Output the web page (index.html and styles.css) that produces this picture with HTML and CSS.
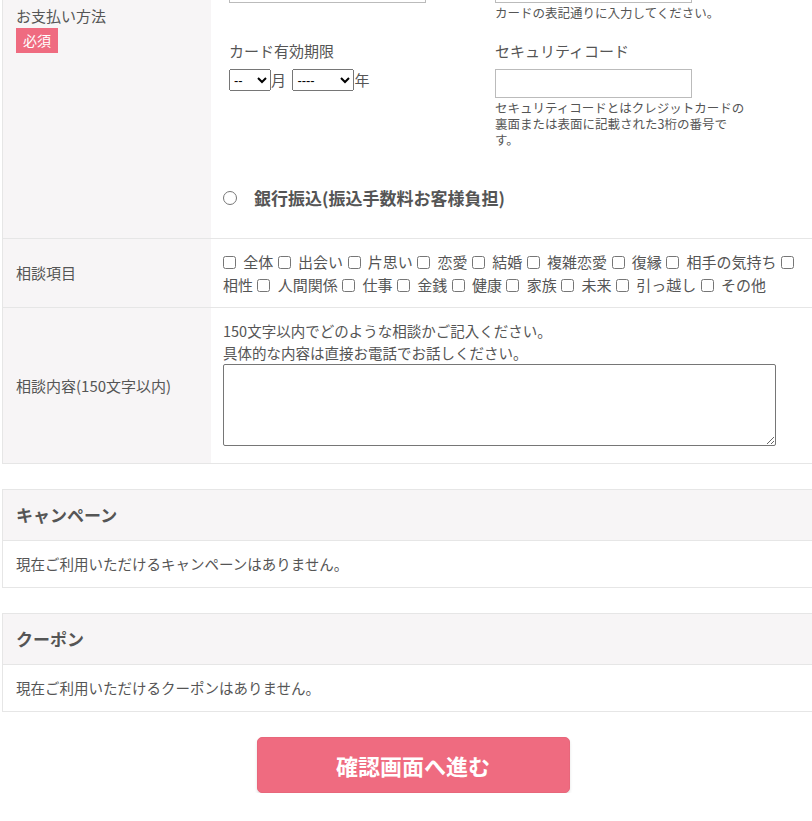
FILE: index.html
```html
<!DOCTYPE html>
<html lang="ja">
<head>
    <meta charset="UTF-8">
    <meta name="viewport" content="width=device-width, initial-scale=1.0">
    <title>ご予約フォーム</title>
    <link rel="stylesheet" href="styles.css">
</head>
<body>

<div class="page">
    <table class="form-table">
        <tr>
            <th>
                <div class="th-label">お支払い方法</div>
                <span class="required">必須</span>
            </th>
            <td class="pay-cell">
                <label class="radio-label">
                    <input type="radio" name="payment" checked>
                    <span>クレジットカード決済</span>
                </label>
                <p class="brands">VISA / MasterCard / JCB / AMEX / Diners</p>

                <div class="card-grid">
                    <div class="field">
                        <p class="field-label">カード番号</p>
                        <input type="text" class="text-input">
                    </div>
                    <div class="field">
                        <p class="field-label">カード名義</p>
                        <input type="text" class="text-input">
                        <p class="help">カードの表記通りに入力してください。</p>
                    </div>
                    <div class="field">
                        <p class="field-label">カード有効期限</p>
                        <div class="expiry">
                            <select class="sel month">
                                <option>--</option>
                            </select>月
                            <select class="sel year">
                                <option>----</option>
                            </select>年
                        </div>
                    </div>
                    <div class="field">
                        <p class="field-label">セキュリティコード</p>
                        <input type="text" class="text-input">
                        <p class="help">セキュリティコードとはクレジットカードの裏面または表面に記載された3桁の番号です。</p>
                    </div>
                </div>

                <label class="radio-label bank">
                    <input type="radio" name="payment">
                    <span>銀行振込(振込手数料お客様負担)</span>
                </label>
            </td>
        </tr>
        <tr>
            <th><div class="th-label">相談項目</div></th>
            <td class="check-cell">
                <label><input type="checkbox"> 全体</label>
                <label><input type="checkbox"> 出会い</label>
                <label><input type="checkbox"> 片思い</label>
                <label><input type="checkbox"> 恋愛</label>
                <label><input type="checkbox"> 結婚</label>
                <label><input type="checkbox"> 複雑恋愛</label>
                <label><input type="checkbox"> 復縁</label>
                <label><input type="checkbox"> 相手の気持ち</label>
                <label><input type="checkbox"> 相性</label>
                <label><input type="checkbox"> 人間関係</label>
                <label><input type="checkbox"> 仕事</label>
                <label><input type="checkbox"> 金銭</label>
                <label><input type="checkbox"> 健康</label>
                <label><input type="checkbox"> 家族</label>
                <label><input type="checkbox"> 未来</label>
                <label><input type="checkbox"> 引っ越し</label>
                <label><input type="checkbox"> その他</label>
            </td>
        </tr>
        <tr>
            <th><div class="th-label">相談内容(150文字以内)</div></th>
            <td class="text-cell">
                <p class="note">150文字以内でどのような相談かご記入ください。<br>具体的な内容は直接お電話でお話しください。</p>
                <textarea class="textarea"></textarea>
            </td>
        </tr>
    </table>

    <section class="info-box">
        <h2 class="info-title">キャンペーン</h2>
        <p class="info-body">現在ご利用いただけるキャンペーンはありません。</p>
    </section>

    <section class="info-box">
        <h2 class="info-title">クーポン</h2>
        <p class="info-body">現在ご利用いただけるクーポンはありません。</p>
    </section>

    <div class="submit-area">
        <button type="submit" class="submit-btn">確認画面へ進む</button>
    </div>
</div>

</body>
</html>
```

FILE: styles.css
```css
body {
    margin: 0;
    font-family: "Noto Sans CJK JP", "Noto Sans", sans-serif;
    color: #555;
    background-color: #fff;
    overflow-x: hidden;
}

p {
    margin: 0;
}

.page {
    width: 822px;
    margin: -182px 0 0 2px;
}

.form-table {
    width: 100%;
    border-collapse: collapse;
    border: 1px solid #e6e6e6;
}

.form-table tr {
    border-bottom: 1px solid #e6e6e6;
}

.form-table th {
    width: 182px;
    padding: 0 13px;
    background-color: #f7f5f6;
    text-align: left;
    font-weight: normal;
    vertical-align: middle;
}

.form-table td {
    padding: 11px 12px;
    vertical-align: top;
}

.th-label {
    font-size: 15px;
    line-height: 22px;
}

.required {
    display: inline-block;
    padding: 0 7px;
    font-size: 14px;
    line-height: 25px;
    color: #fff;
    background-color: #ef6b80;
}

.form-table td.pay-cell {
    padding: 36px 12px 28px;
}

.radio-label {
    display: flex;
    align-items: center;
    gap: 17px;
    font-size: 17px;
    font-weight: bold;
    line-height: 24px;
}

.radio-label input {
    width: 14px;
    height: 14px;
    margin: 0;
}

.brands {
    margin: 14px 0 30px;
    padding-left: 6px;
    font-size: 14px;
    line-height: 22px;
}

.card-grid {
    display: grid;
    grid-template-columns: 266px 1fr;
    row-gap: 19px;
    padding-left: 6px;
}

.field-label {
    margin-bottom: 7px;
    font-size: 15px;
    line-height: 22px;
}

.text-input {
    display: block;
    box-sizing: border-box;
    width: 197px;
    height: 29px;
    border: 1px solid #bbb;
    border-radius: 0;
    padding: 2px 6px;
}

.help {
    width: 251px;
    margin-top: 2px;
    font-size: 12.5px;
    line-height: 16px;
}

.expiry {
    font-size: 15px;
    line-height: 22px;
}

.sel {
    height: 22px;
    font-size: 13px;
    vertical-align: top;
    margin: 0;
}

.sel.month {
    width: 42px;
}

.sel.year {
    width: 62px;
    margin-left: 3px;
}

.radio-label.bank {
    margin-top: 38px;
}

.check-cell {
    font-size: 15px;
    line-height: 23px;
    word-break: keep-all;
}

.check-cell input {
    margin: 0 4px 0 1px;
    vertical-align: -1px;
}

.check-cell label:first-child input {
    margin-left: 0;
}

.form-table td.text-cell {
    padding-top: 12px;
    padding-bottom: 17px;
}

.note {
    font-size: 14.5px;
    line-height: 22px;
}

.textarea {
    display: block;
    box-sizing: border-box;
    width: 553px;
    height: 82px;
    margin: 0;
    border: 1px solid #767676;
    border-radius: 2px;
}

.info-box {
    margin-top: 25px;
    border: 1px solid #e6e6e6;
}

.info-title {
    margin: 0;
    padding: 0 13px;
    font-size: 17px;
    line-height: 50px;
    background-color: #f7f5f6;
    border-bottom: 1px solid #e6e6e6;
}

.info-body {
    padding: 12px 13px;
    font-size: 14.5px;
    line-height: 22px;
}

.submit-area {
    margin-top: 25px;
    text-align: center;
}

.submit-btn {
    width: 313px;
    height: 56px;
    font-family: inherit;
    font-size: 22px;
    font-weight: bold;
    color: #fff;
    background-color: #ef6b80;
    border: 1px solid #e8677b;
    border-radius: 5px;
    box-shadow: 0 2px 3px rgba(0, 0, 0, 0.12);
    cursor: pointer;
}
```
